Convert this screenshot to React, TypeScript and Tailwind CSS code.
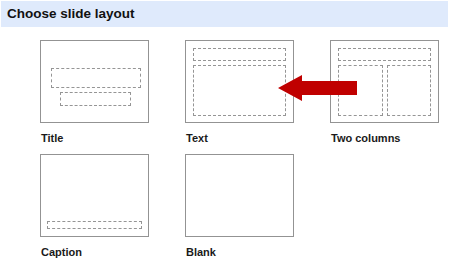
const layouts = [
  { id: "title", label: "Title" },
  { id: "text", label: "Text" },
  { id: "two", label: "Two columns" },
  { id: "caption", label: "Caption" },
  { id: "blank", label: "Blank" },
];

const dashed = "border border-dashed border-[#959595]";

function Thumb({ id }: { id: string }) {
  if (id === "title") {
    return (
      <div className="flex h-full flex-col items-center gap-[4px] pt-[27px] pl-[2px]">
        <div className={`h-[20px] w-[90px] ${dashed}`} />
        <div className={`h-[14px] w-[71px] ${dashed}`} />
      </div>
    );
  }
  if (id === "text") {
    return (
      <div className="flex h-full flex-col gap-[4px] px-[7px] pt-[7px] pb-[6px]">
        <div className={`h-[13px] ${dashed}`} />
        <div className={`flex-1 ${dashed}`} />
      </div>
    );
  }
  if (id === "two") {
    return (
      <div className="flex h-full flex-col gap-[4px] px-[7px] pt-[7px] pb-[6px]">
        <div className={`h-[13px] ${dashed}`} />
        <div className="flex flex-1 gap-[4px]">
          <div className={`flex-1 ${dashed}`} />
          <div className={`flex-1 ${dashed}`} />
        </div>
      </div>
    );
  }
  if (id === "caption") {
    return (
      <div className="flex h-full flex-col justify-end pl-[6px] pr-[6px] pb-[7px]">
        <div className={`h-[8px] ${dashed}`} />
      </div>
    );
  }
  return null;
}

export default function App() {
  return (
    <div className="relative h-[260px] w-[451px] overflow-hidden bg-white font-['Liberation_Sans',Arial,sans-serif]">
      <div className="mx-[1px] mt-[1px] flex h-[26px] w-[447px] items-center bg-[#dfeafc] pl-[6px]">
        <h1 className="text-[13.5px] font-bold leading-none text-[#111]">
          Choose slide layout
        </h1>
      </div>
      <div className="grid grid-cols-[109px_109px_109px] gap-x-[36px] gap-y-[9px] pt-[13px] pl-[40px]">
        {layouts.map((l) => (
          <div key={l.id} className="flex flex-col">
            <div className="h-[83px] w-[109px] border border-[#939393] bg-white">
              <Thumb id={l.id} />
            </div>
            <span className="mt-[9px] pl-[1px] text-[11px] font-bold leading-[13px] text-[#1a1a1a]">
              {l.label}
            </span>
          </div>
        ))}
      </div>
      <svg
        className="absolute left-0 top-0"
        width="451"
        height="260"
        viewBox="0 0 451 260"
      >
        <polygon
          points="278,88 302,75 302,81 357,81 357,95 302,95 302,101"
          fill="#c00000"
        />
      </svg>
    </div>
  );
}
